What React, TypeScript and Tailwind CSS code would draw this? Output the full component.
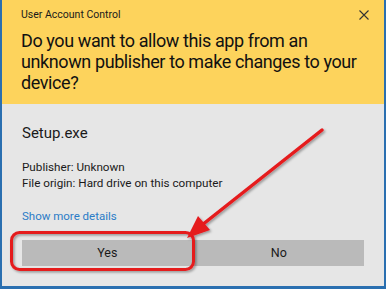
import React from "react";

export default function App() {
  return (
    <div
      className="relative w-[386px] h-[289px] overflow-hidden border-l-2 border-r-2 border-b-[3px] border-[#2a6fb0] bg-[#e6e6e6]"
      style={{ fontFamily: 'Roboto, "Noto Sans", sans-serif' }}
    >
      <div className="bg-[#fdd35c] pl-[19px] pr-[12px] pt-[6px] pb-[10px] h-[104px]">
        <div className="flex items-center justify-between h-[18px]">
          <span className="text-[10.5px] leading-[18px] text-[#1a1a1a]">User Account Control</span>
          <svg width="12" height="12" viewBox="0 0 12 12" className="mr-[2px]">
            <path d="M1.5 1.5 L10.5 10.5 M10.5 1.5 L1.5 10.5" stroke="#333" strokeWidth="1.1" fill="none" />
          </svg>
        </div>
        <div className="mt-[6px] text-[18px] leading-[21px] tracking-[-0.4px] text-[#111] pr-[4px]">
          Do you want to allow this app from an unknown publisher to make changes to your device?
        </div>
      </div>
      <div className="pl-[20px] pr-[20px] pt-[18px]">
        <div className="text-[15px] leading-[22px] text-[#1a1a1a]">Setup.exe</div>
        <div className="mt-[15px] text-[11.7px] leading-[16px] text-[#1a1a1a]">
          <div>Publisher: Unknown</div>
          <div>File origin: Hard drive on this computer</div>
        </div>
        <div className="mt-[17px] text-[11.5px] leading-[16px] text-[#2b7cc6]">Show more details</div>
        <div className="mt-[16px] flex h-[26px]">
          <div className="flex-1 bg-[#bababa] flex items-center justify-center text-[12.5px] text-[#1a1a1a]">Yes</div>
          <div className="w-[1px]" />
          <div className="flex-1 bg-[#bababa] flex items-center justify-center text-[12.5px] text-[#1a1a1a]">No</div>
        </div>
      </div>
      <svg className="absolute left-0 top-0 pointer-events-none" width="386" height="289" viewBox="0 0 386 289">
        <defs>
          <filter id="sh" x="-10%" y="-10%" width="130%" height="130%">
            <feDropShadow dx="1.5" dy="1.5" stdDeviation="1.2" floodColor="#000" floodOpacity="0.35" />
          </filter>
        </defs>
        <g filter="url(#sh)">
          <rect x="9.5" y="232.5" width="182" height="37" rx="8" ry="8" fill="none" stroke="#e51a1f" strokeWidth="3" />
          <line x1="320" y1="130" x2="200" y2="225" stroke="#e51a1f" strokeWidth="3.5" strokeLinecap="round" />
          <polygon points="185,238 208,230 196,216" fill="#e51a1f" />
        </g>
      </svg>
    </div>
  );
}
